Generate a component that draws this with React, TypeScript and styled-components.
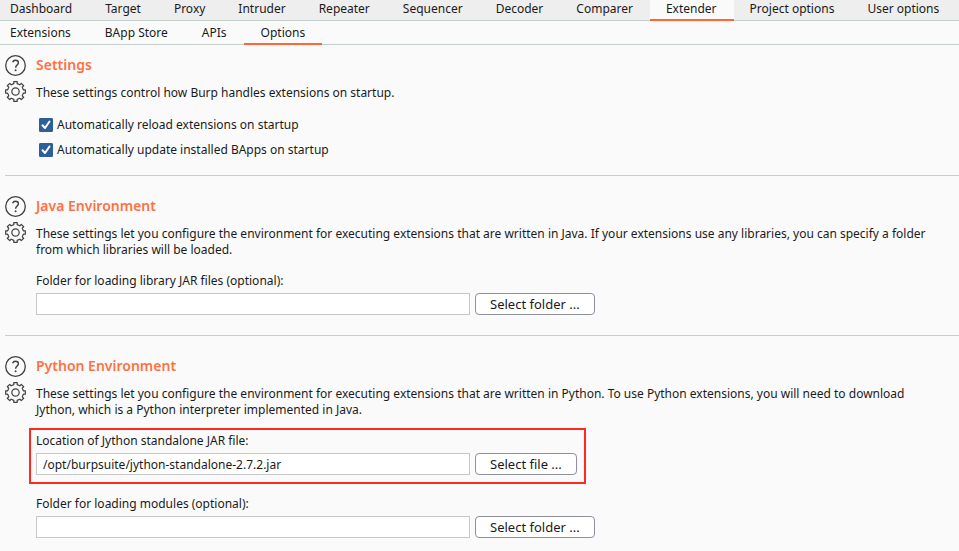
import React, { useId, useState } from "react";
import styled, { createGlobalStyle, css } from "styled-components";

const GlobalStyle = createGlobalStyle`
  *, *::before, *::after { box-sizing: border-box; }
  body {
    margin: 0;
    background: #fafafa;
    color: #1a1a1a;
    font: 12px/16px "Noto Sans", "Open Sans", sans-serif;
  }
`;

const TabBar = styled.nav<{ $tone: "main" | "sub" }>`
  display: flex;
  overflow: hidden;
  height: ${(p) => (p.$tone === "main" ? 21 : 24)}px;
  background: ${(p) => (p.$tone === "main" ? "#eeeeee" : "#fafafa")};
  box-shadow: inset 0 -1px 0 #c5cfcc;
  button { padding: ${(p) => (p.$tone === "main" ? "0 17px 3px 16px" : "0 17px")}; }
`;

const Tab = styled.button<{ $active: boolean }>`
  flex: none;
  border: 0;
  background: none;
  color: inherit;
  font: inherit;
  white-space: nowrap;
  &&:first-child { padding-left: 10px; }
  ${(p) =>
    p.$active &&
    css`
      background: #fafafa;
      box-shadow: inset 0 -2px 0 #ff6633;
    `}
`;

const Panel = styled.main`
  padding-left: 5px;
`;

const SectionRoot = styled.section`
  display: grid;
  grid-template-columns: 21px minmax(0, 1fr);
  column-gap: 10px;
  padding: 20px 0;
  border-bottom: 1px solid #cccccc;
  &:first-child { padding: 10px 0 13px; }
  &:last-child { border-bottom: 0; }
`;

const IconColumn = styled.div`
  display: flex;
  flex-direction: column;
  gap: 5px;
`;

const IconButton = styled.button`
  display: block;
  width: 21px;
  height: 21px;
  padding: 0;
  border: 0;
  background: none;
  color: #404040;
  svg { display: block; }
`;

const Title = styled.h2`
  margin: 0 0 10px;
  color: #ff7145;
  font-size: 14px;
  line-height: 20px;
  font-weight: 600;
`;

const Description = styled.p`
  margin: 0;
  padding-right: 20px;
`;

const CheckList = styled.div`
  padding: 11px 0 0 3px;
`;

const CheckLabel = styled.label`
  display: flex;
  align-items: center;
  gap: 4px;
  height: 25px;
`;

const CheckBox = styled.span`
  display: grid;
  width: 14px;
  height: 14px;
  input, svg { grid-area: 1 / 1; }
  input {
    appearance: none;
    width: 14px;
    height: 14px;
    margin: 0;
    border: 1px solid #2d6099;
    border-radius: 1px;
    background: #ffffff;
  }
  input:checked { background: #2d6099; }
  svg { pointer-events: none; }
`;

const Fields = styled.div`
  display: flex;
  flex-direction: column;
  align-items: flex-start;
  gap: 21px;
  padding-top: 15px;
`;

const FieldRoot = styled.div<{ $marked?: boolean }>`
  ${(p) =>
    p.$marked &&
    css`
      margin: -5px -9px -9px -7px;
      padding: 3px 7px 7px 5px;
      border: 2px solid #ff2a1f;
    `}
`;

const FieldLabel = styled.label`
  display: block;
  margin-bottom: 4px;
`;

const FieldRow = styled.div`
  display: flex;
  gap: 5px;
`;

const PathInput = styled.input`
  flex: 0 1 434px;
  width: 434px;
  min-width: 0;
  height: 22px;
  padding: 0 6px;
  border: 1px solid #c8c8c8;
  background: #ffffff;
  color: inherit;
  font: inherit;
`;

const BrowseButton = styled.button`
  flex: none;
  height: 22px;
  padding: 0 14px;
  border: 1px solid #8f8f9d;
  border-radius: 4px;
  background: #ffffff;
  color: inherit;
  font: inherit;
  font-size: 13px;
`;

const HelpIcon = () => (
  <svg width="21" height="21" viewBox="0 0 21 21" fill="none" stroke="currentColor" strokeWidth="1.3">
    <circle cx="10.5" cy="10.5" r="9.8" />
    <path d="M7.6 7.2C8.1 5.8 9.2 5.2 10.5 5.2C12.3 5.2 13.4 6.2 13.4 7.7C13.4 9.9 10.6 10.1 10.6 12.7" strokeWidth="1.4" />
    <circle cx="10.6" cy="15.2" r="1" fill="currentColor" stroke="none" />
  </svg>
);

const gearPath = (() => {
  const profile: [number, number][] = [
    [-12, 8],
    [-10, 10],
    [10, 10],
    [12, 8],
  ];
  const points: string[] = [];
  for (let tooth = 0; tooth < 8; tooth++) {
    profile.forEach(([offset, radius]) => {
      const angle = ((tooth * 45 + offset) * Math.PI) / 180;
      points.push(`${(10.5 + radius * Math.cos(angle)).toFixed(2)} ${(10.5 + radius * Math.sin(angle)).toFixed(2)}`);
    });
  }
  return `M${points.join("L")}Z`;
})();

const GearIcon = () => (
  <svg width="21" height="21" viewBox="0 0 21 21" fill="none" stroke="currentColor" strokeWidth="1.2" strokeLinejoin="round">
    <path d={gearPath} />
    <circle cx="10.5" cy="10.5" r="3.7" />
  </svg>
);

function Tabs({ tone, label, items, initial }: { tone: "main" | "sub"; label: string; items: string[]; initial: string }) {
  const [active, setActive] = useState(initial);
  return (
    <TabBar $tone={tone} aria-label={label}>
      {items.map((item) => (
        <Tab key={item} type="button" $active={item === active} onClick={() => setActive(item)}>
          {item}
        </Tab>
      ))}
    </TabBar>
  );
}

function Section({ title, text, children }: { title: string; text: string; children: React.ReactNode }) {
  return (
    <SectionRoot>
      <IconColumn>
        <IconButton type="button" aria-label={`${title} help`}><HelpIcon /></IconButton>
        <IconButton type="button" aria-label={`${title} menu`}><GearIcon /></IconButton>
      </IconColumn>
      <div>
        <Title>{title}</Title>
        <Description>{text}</Description>
        {children}
      </div>
    </SectionRoot>
  );
}

function Check({ label }: { label: string }) {
  const [checked, setChecked] = useState(true);
  return (
    <CheckLabel>
      <CheckBox>
        <input type="checkbox" checked={checked} onChange={(e) => setChecked(e.target.checked)} />
        {checked && (
          <svg width="14" height="14" viewBox="0 0 14 14" fill="none" stroke="#ffffff" strokeWidth="2" strokeLinecap="round" strokeLinejoin="round">
            <path d="M3.5 7.3L6 10L10.5 3.5" />
          </svg>
        )}
      </CheckBox>
      {label}
    </CheckLabel>
  );
}

function PathField({ label, value = "", action, marked }: { label: string; value?: string; action: string; marked?: boolean }) {
  const id = useId();
  return (
    <FieldRoot $marked={marked}>
      <FieldLabel htmlFor={id}>{label}</FieldLabel>
      <FieldRow>
        <PathInput id={id} type="text" defaultValue={value} />
        <BrowseButton type="button">{action}</BrowseButton>
      </FieldRow>
    </FieldRoot>
  );
}

const mainTabs = ["Dashboard", "Target", "Proxy", "Intruder", "Repeater", "Sequencer", "Decoder", "Comparer", "Extender", "Project options", "User options"];
const subTabs = ["Extensions", "BApp Store", "APIs", "Options"];

export default function App() {
  return (
    <>
      <GlobalStyle />
      <Tabs tone="main" label="Tools" items={mainTabs} initial="Extender" />
      <Tabs tone="sub" label="Extender" items={subTabs} initial="Options" />
      <Panel>
        <Section title="Settings" text="These settings control how Burp handles extensions on startup.">
          <CheckList>
            <Check label="Automatically reload extensions on startup" />
            <Check label="Automatically update installed BApps on startup" />
          </CheckList>
        </Section>
        <Section
          title="Java Environment"
          text="These settings let you configure the environment for executing extensions that are written in Java. If your extensions use any libraries, you can specify a folder from which libraries will be loaded."
        >
          <Fields>
            <PathField label="Folder for loading library JAR files (optional):" action="Select folder ..." />
          </Fields>
        </Section>
        <Section
          title="Python Environment"
          text="These settings let you configure the environment for executing extensions that are written in Python. To use Python extensions, you will need to download Jython, which is a Python interpreter implemented in Java."
        >
          <Fields>
            <PathField marked label="Location of Jython standalone JAR file:" value="/opt/burpsuite/jython-standalone-2.7.2.jar" action="Select file ..." />
            <PathField label="Folder for loading modules (optional):" action="Select folder ..." />
          </Fields>
        </Section>
      </Panel>
    </>
  );
}
